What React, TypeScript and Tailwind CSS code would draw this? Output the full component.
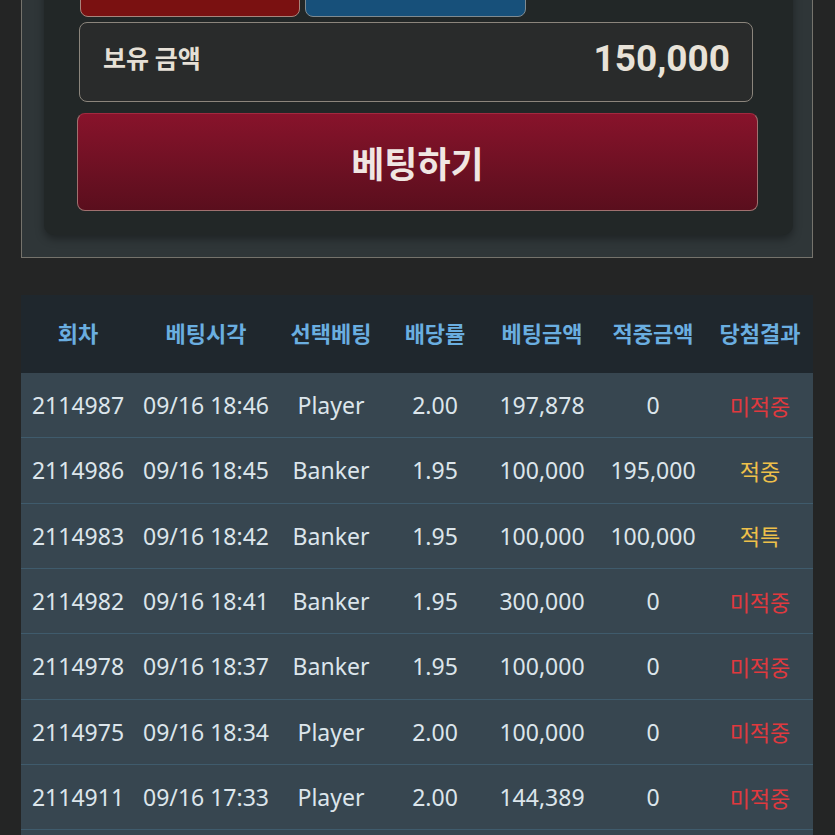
import React from "react";

type Row = {
  round: string;
  time: string;
  pick: string;
  odds: string;
  bet: string;
  win: string;
  result: string;
};

const rows: Row[] = [
  { round: "2114987", time: "09/16 18:46", pick: "Player", odds: "2.00", bet: "197,878", win: "0", result: "미적중" },
  { round: "2114986", time: "09/16 18:45", pick: "Banker", odds: "1.95", bet: "100,000", win: "195,000", result: "적중" },
  { round: "2114983", time: "09/16 18:42", pick: "Banker", odds: "1.95", bet: "100,000", win: "100,000", result: "적특" },
  { round: "2114982", time: "09/16 18:41", pick: "Banker", odds: "1.95", bet: "300,000", win: "0", result: "미적중" },
  { round: "2114978", time: "09/16 18:37", pick: "Banker", odds: "1.95", bet: "100,000", win: "0", result: "미적중" },
  { round: "2114975", time: "09/16 18:34", pick: "Player", odds: "2.00", bet: "100,000", win: "0", result: "미적중" },
  { round: "2114911", time: "09/16 17:33", pick: "Player", odds: "2.00", bet: "144,389", win: "0", result: "미적중" },
  { round: "2114910", time: "09/16 17:32", pick: "Player", odds: "2.00", bet: "100,000", win: "0", result: "미적중" },
];

const headers = ["회차", "베팅시각", "선택베팅", "배당률", "베팅금액", "적중금액", "당첨결과"];

const grid = "grid grid-cols-[114px_142px_108px_100px_114px_108px_106px]";

export default function App() {
  return (
    <div
      className="w-full h-[835px] overflow-hidden bg-[#242525]"
      style={{ fontFamily: '"Noto Sans", "Noto Sans CJK KR", sans-serif' }}
    >
      {/* Betting panel */}
      <div className="ml-[21px] w-[792px] mt-[-54px] border border-[#75736c] bg-[#2f3638] pl-[22px] pr-[19px] pb-[22px]">
        <div className="rounded-[10px] bg-[#222727] shadow-[0_4px_8px_rgba(0,0,0,0.35)] pb-[24px]">
          <div className="flex gap-[5px] pl-[36px]">
            <div className="w-[220px] h-[70px] rounded-[8px] border border-[#a8857c] bg-[#7a1111]" />
            <div className="w-[221px] h-[70px] rounded-[8px] border border-[#7f8a90] bg-[#17507a]" />
          </div>
          <div className="ml-[35px] mt-[5px] w-[674px] h-[80px] rounded-[8px] border border-[#8b857c] bg-[#292b2b] flex items-center justify-between pl-[23px] pr-[22px] pb-[8px]">
            <span
              className="text-[25px] font-bold text-[#e6e0d6]"
              style={{ fontFamily: '"Noto Sans CJK KR", sans-serif' }}
            >
              보유 금액
            </span>
            <span
              className="text-[37px] font-bold text-[#e8e2d8] leading-none"
              style={{ fontFamily: 'Roboto, "Noto Sans", sans-serif' }}
            >
              150,000
            </span>
          </div>
          <div className="ml-[33px] mt-[11px] w-[681px] h-[98px] rounded-[8px] border border-[#a0706f] border-t-[#a3293f] bg-gradient-to-b from-[#88132b] to-[#5a0e1d] flex items-center justify-center">
            <span
              className="text-[36px] font-bold text-[#f0e6e2]"
              style={{ fontFamily: '"Noto Sans CJK KR", sans-serif' }}
            >
              베팅하기
            </span>
          </div>
        </div>
      </div>

      {/* History table */}
      <div className="ml-[21px] mt-[37px] w-[792px]">
        <div className={`${grid} h-[78px] bg-[#1f272d] items-center`}>
          {headers.map((h) => (
            <div
              key={h}
              className="text-center text-[22px] font-bold text-[#6aaee0] pb-[3px]"
              style={{ fontFamily: '"Noto Sans CJK KR", sans-serif' }}
            >
              {h}
            </div>
          ))}
        </div>
        {rows.map((r) => (
          <div
            key={r.round}
            className={`${grid} h-[65.33px] bg-[#374650] border-b border-[#3f5b6c] items-center text-[23px] text-[#dce5eb]`}
          >
            <div className="text-center">{r.round}</div>
            <div className="text-center">{r.time}</div>
            <div className="text-center">{r.pick}</div>
            <div className="text-center">{r.odds}</div>
            <div className="text-center">{r.bet}</div>
            <div className="text-center">{r.win}</div>
            <div
              className={`text-center text-[22px] ${r.result === "미적중" ? "text-[#e0393e]" : "text-[#eec04a]"}`}
              style={{ fontFamily: '"Noto Sans CJK KR", sans-serif' }}
            >
              {r.result}
            </div>
          </div>
        ))}
      </div>
    </div>
  );
}
